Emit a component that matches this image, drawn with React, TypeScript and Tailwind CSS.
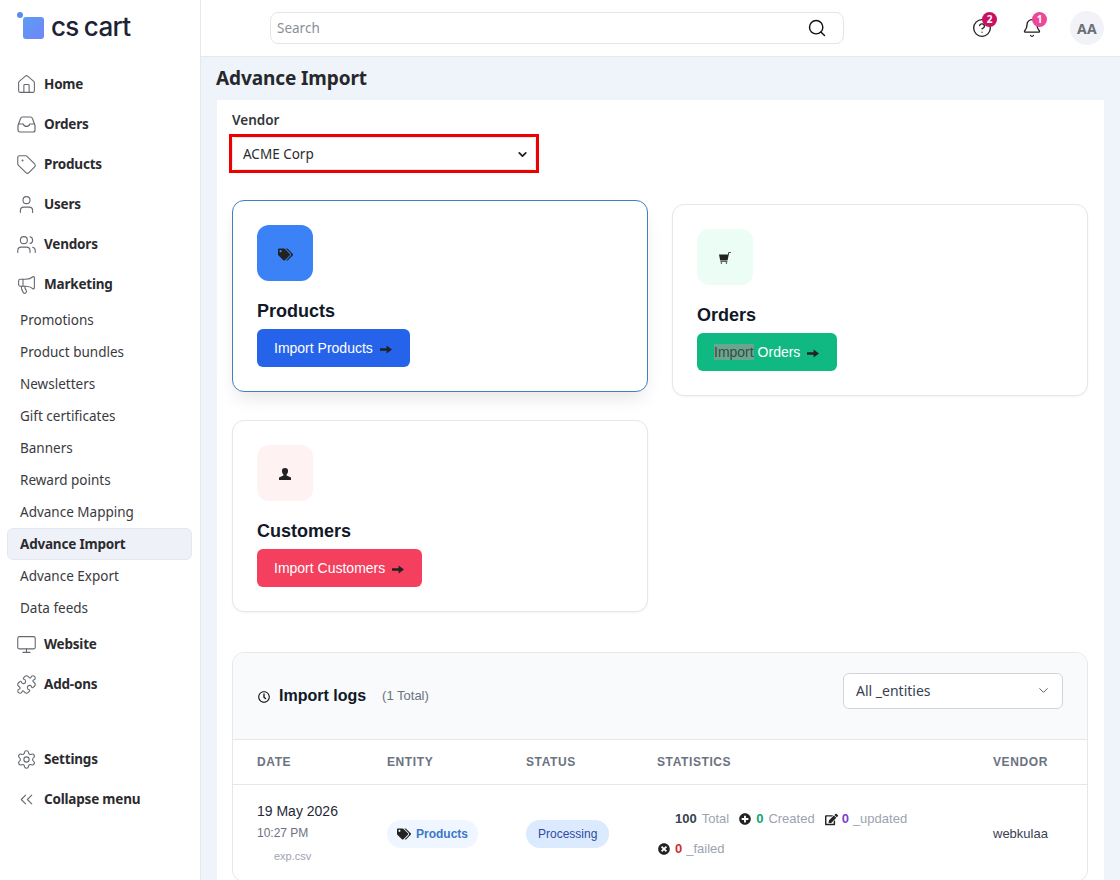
import {
  Bell,
  ChevronDown,
  ChevronsLeft,
  CircleHelp,
  House,
  Megaphone,
  Monitor,
  Puzzle,
  Search,
  Settings,
  Tag,
  User,
  Users,
} from "lucide-react";
import type { ReactNode } from "react";
import { FaPlusCircle, FaRegClock, FaEdit, FaTags, FaTimesCircle } from "react-icons/fa";

const ui = "font-['Noto_Sans',sans-serif]";
const body = "font-['Liberation_Sans',Arial,sans-serif]";

const subItems = [
  "Promotions",
  "Product bundles",
  "Newsletters",
  "Gift certificates",
  "Banners",
  "Reward points",
  "Advance Mapping",
  "Advance Import",
  "Advance Export",
  "Data feeds",
];

function TrayIcon() {
  return (
    <svg width="19" height="17" viewBox="0 0 19 17" fill="none" stroke="currentColor" strokeWidth="1.2" strokeLinejoin="round">
      <path d="M1 9.5 3.6 2.4A2 2 0 0 1 5.5 1h8a2 2 0 0 1 1.9 1.4L18 9.5V14a2 2 0 0 1-2 2H3a2 2 0 0 1-2-2z" />
      <path d="M1 8h5.2c.5 1.5 1.8 2.4 3.3 2.4s2.8-.9 3.3-2.4H18" />
    </svg>
  );
}

function ArrowIcon() {
  return (
    <svg width="12" height="9" viewBox="0 0 12 9" fill="currentColor" className="mt-[2px]">
      <path d="M0 3.2h6.6V.4L12 4.5 6.6 8.6V5.8H0z" />
    </svg>
  );
}

function CartIcon() {
  return (
    <svg width="12" height="12" viewBox="0 0 12 12" fill="currentColor">
      <path d="M0 2.6h8.9L9.4.3H12v.8h-1.9L8.5 8.6H1.2z" />
      <path d="M1.4 9.2h7v.7h-7z" />
      <circle cx="2.4" cy="11" r=".8" />
      <circle cx="7.4" cy="11" r=".8" />
    </svg>
  );
}

function BustIcon() {
  return (
    <svg width="12" height="12" viewBox="0 0 12 12" fill="currentColor">
      <path d="M6 0a3 3 0 0 1 3 3.3c0 1.4-.7 2.6-1.4 3.1v1L12 9.6V12H0V9.6l4.4-2.2v-1C3.7 5.9 3 4.7 3 3.3A3 3 0 0 1 6 0z" />
    </svg>
  );
}

function NavItem({ icon, label }: { icon: ReactNode; label: string }) {
  return (
    <div className="flex h-10 items-center gap-[7px] pl-[16px] text-[13.5px] font-bold tracking-[-0.2px] text-[#2b2b2f]">
      <span className="flex w-[21px] justify-center text-[#66696e]">{icon}</span>
      {label}
    </div>
  );
}

function Sidebar() {
  const ic = { size: 21, strokeWidth: 1.25 };
  return (
    <aside className={`${ui} flex w-[201px] shrink-0 flex-col border-r border-[#e5e8ef] bg-white`}>
      <div className="relative h-[64px]">
        <span className="absolute left-[17px] top-[12px] h-[6px] w-[6px] rounded-full bg-[#5b8def]" />
        <span className="absolute left-[23px] top-[17px] h-[22px] w-[21px] rounded-[3px] bg-gradient-to-br from-[#5b9cf5] to-[#6f86f7]" />
        <span className="absolute left-[51px] top-[9px] font-['Inter',sans-serif] text-[26px] font-medium leading-[36px] tracking-[-0.7px] text-[#1e2235] [word-spacing:-1px]">
          cs cart
        </span>
      </div>
      <NavItem icon={<House {...ic} />} label="Home" />
      <NavItem icon={<TrayIcon />} label="Orders" />
      <NavItem icon={<Tag {...ic} />} label="Products" />
      <NavItem icon={<User {...ic} />} label="Users" />
      <NavItem icon={<Users {...ic} />} label="Vendors" />
      <NavItem icon={<Megaphone {...ic} />} label="Marketing" />
      <div className="flex flex-col">
        {subItems.map((item) =>
          item === "Advance Import" ? (
            <div
              key={item}
              className="ml-[7px] mr-[8px] flex h-8 items-center rounded-[6px] border border-[#e3e8f0] bg-[#eef2f8] pl-[12px] text-[13.5px] font-bold tracking-[-0.2px] text-[#2b2b2f]"
            >
              {item}
            </div>
          ) : (
            <div key={item} className="flex h-8 items-center pl-[20px] text-[13.5px] text-[#3a3a3e]">
              {item}
            </div>
          ),
        )}
      </div>
      <NavItem icon={<Monitor {...ic} />} label="Website" />
      <NavItem icon={<Puzzle {...ic} />} label="Add-ons" />
      <div className="mt-[35px]">
        <NavItem icon={<Settings {...ic} />} label="Settings" />
        <NavItem icon={<ChevronsLeft {...ic} />} label="Collapse menu" />
      </div>
    </aside>
  );
}

function TopBar() {
  return (
    <header className="flex h-[57px] shrink-0 items-center border-b border-[#e5e8ef] bg-white pl-[69px] pr-[16px]">
      <div className={`${ui} flex h-[32px] w-[574px] items-center justify-between rounded-[8px] border border-[#e2e5ea] pl-[6px] pr-[16px] text-[13.5px] text-[#8b8f96]`}>
        <span>Search</span>
        <Search size={20} strokeWidth={1.7} className="text-[#111]" />
      </div>
      <div className="relative ml-[128px] text-[#1f1f1f]">
        <CircleHelp size={20} strokeWidth={1.6} />
        <span className={`${ui} absolute left-[10px] top-[-6px] flex h-[15px] w-[15px] items-center justify-center rounded-full bg-[#c9115f] text-[10px] font-bold text-white`}>
          2
        </span>
      </div>
      <div className="relative ml-[30px] text-[#1f1f1f]">
        <Bell size={20} strokeWidth={1.6} />
        <span className={`${ui} absolute left-[10px] top-[-6px] flex h-[15px] w-[15px] items-center justify-center rounded-full bg-[#ec4899] text-[10px] font-bold text-white`}>
          1
        </span>
      </div>
      <div className={`${ui} ml-[28px] flex h-[34px] w-[34px] items-center justify-center rounded-full bg-[#f1f3f8] text-[14px] font-bold tracking-[0.3px] text-[#6b6f76]`}>
        AA
      </div>
    </header>
  );
}

type CardProps = {
  title: string;
  action: ReactNode;
  icon: ReactNode;
  tile: string;
  button: string;
  active?: boolean;
};

function ImportCard({ title, action, icon, tile, button, active }: CardProps) {
  return (
    <div
      className={`h-[192px] rounded-[12px] border bg-white p-[24px] ${
        active
          ? "-translate-y-[4px] border-[#3f7fc4] shadow-[0_10px_18px_-4px_rgba(0,0,0,0.1)]"
          : "border-[#e5e7eb] shadow-[0_1px_2px_rgba(0,0,0,0.05)]"
      }`}
    >
      <div className={`flex h-[56px] w-[56px] items-center justify-center rounded-[12px] pt-[2px] text-[#222] ${tile}`}>
        {icon}
      </div>
      <h3 className="mt-[16px] text-[18px] font-bold leading-[28px] text-[#111827]">{title}</h3>
      <div className={`mt-[4px] inline-flex h-[38px] items-center gap-[7px] rounded-[6px] pl-[17px] pr-[18px] text-[14px] text-white ${button}`}>
        <span>{action}</span>
        <span className="text-[#222]">
          <ArrowIcon />
        </span>
      </div>
    </div>
  );
}

function LogsCard() {
  const cols = "grid grid-cols-[130px_139px_131px_336px_1fr] pl-[24px]";
  return (
    <div className="mt-[40px] overflow-hidden rounded-[12px] border border-[#e5e7eb]">
      <div className="flex h-[87px] items-center justify-between border-b border-[#e5e7eb] bg-[#f8fafc] pl-[25px] pr-[24px]">
        <div className="flex items-center">
          <FaRegClock size={12} className="mt-[2px] text-[#111]" />
          <span className="ml-[9px] text-[16px] font-bold text-[#111827]">Import logs</span>
          <span className="ml-[16px] text-[13px] text-[#6b7280]">(1 Total)</span>
        </div>
        <div className={`${ui} mb-[11px] flex h-[36px] w-[220px] items-center justify-between rounded-[6px] border border-[#d1d5db] bg-white pl-[12px] pr-[11px] text-[14px] text-[#374151]`}>
          All _entities
          <ChevronDown size={15} strokeWidth={1.5} className="text-[#4b5563]" />
        </div>
      </div>
      <div className={`${cols} h-[45px] items-center border-b border-[#e5e7eb] text-[12px] font-bold tracking-[0.6px] text-[#6b7280]`}>
        <span>DATE</span>
        <span>ENTITY</span>
        <span>STATUS</span>
        <span>STATISTICS</span>
        <span>VENDOR</span>
      </div>
      <div className={`${cols} h-[96px] items-center pt-[2px]`}>
        <div className="mt-[14px] self-start">
          <div className="text-[14px] leading-[20px] text-[#1f2937]">19 May 2026</div>
          <div className="mt-[2px] text-[12px] leading-[20px] text-[#6b7280]">10:27 PM</div>
          <div className="mt-[5px] pl-[17px] text-[11px] leading-[16px] text-[#9ca3af]">exp.csv</div>
        </div>
        <div>
          <span className="inline-flex h-[28px] items-center gap-[5px] rounded-full bg-[#eff6ff] px-[10px] text-[12px] font-bold text-[#3b78c9]">
            <FaTags size={14} className="text-[#222]" />
            Products
          </span>
        </div>
        <div>
          <span className="inline-flex h-[28px] items-center rounded-full bg-[#dbeafe] px-[12px] text-[12px] text-[#2f4a9f]">
            Processing
          </span>
        </div>
        <div className="text-[13px] leading-[30px] text-[#9ca3af]">
          <div className="flex items-center pl-[18px]">
            <b className="text-[#374151]">100</b>
            <span className="ml-[5px]">Total</span>
            <FaPlusCircle size={12} className="ml-[10px] text-[#222]" />
            <b className="ml-[5px] text-[#10a37a]">0</b>
            <span className="ml-[5px]">Created</span>
            <FaEdit size={13} className="ml-[10px] text-[#222]" />
            <b className="ml-[4px] text-[#7e3fd1]">0</b>
            <span className="ml-[4px]">_updated</span>
          </div>
          <div className="flex items-center pl-[1px]">
            <FaTimesCircle size={12} className="text-[#222]" />
            <b className="ml-[5px] text-[#c93030]">0</b>
            <span className="ml-[4px]">_failed</span>
          </div>
        </div>
        <div className="text-[13px] text-[#374151]">webkulaa</div>
      </div>
    </div>
  );
}

export default function App() {
  return (
    <div className="flex h-[880px] w-[1120px] overflow-hidden bg-white">
      <Sidebar />
      <div className="flex min-w-0 flex-1 flex-col bg-[#eff3fa]">
        <TopBar />
        <main className="flex-1 pl-[16px] pr-[16px]">
          <h1 className={`${ui} ml-[-1px] h-[43px] text-[19px] font-bold leading-[42px] tracking-[-0.1px] text-[#26282c]`}>Advance Import</h1>
          <div className={`${body} h-[800px] bg-white pl-[15px] pr-[16px] pt-[11px]`}>
            <label className={`${ui} block text-[13.5px] font-semibold leading-[18px] text-[#33363b]`}>Vendor</label>
            <div className="ml-[-3px] mt-[5px] h-[39px] w-[310px] border-[3px] border-[#ee0000]">
              <div className={`${ui} flex h-full items-center justify-between rounded-[4px] border border-[#e5e7eb] bg-white pb-0 pl-[10px] pr-[6px] pt-[1px] text-[13.5px] text-[#2b2b2f]`}>
                ACME Corp
                <ChevronDown size={13} strokeWidth={3.4} className="text-[#222]" />
              </div>
            </div>
            <div className="mt-[31px] grid grid-cols-[416px_416px] gap-x-[24px] gap-y-[24px]">
              <ImportCard
                active
                title="Products"
                action="Import Products"
                icon={<FaTags size={15} />}
                tile="bg-[#3b82f6]"
                button="bg-[#2563eb]"
              />
              <ImportCard
                title="Orders"
                action={
                  <>
                    <span className="bg-[#6aa68f] text-[#3c4a44]">Import</span> Orders
                  </>
                }
                icon={<CartIcon />}
                tile="bg-[#ecfdf5]"
                button="bg-[#10b981]"
              />
              <ImportCard
                title="Customers"
                action="Import Customers"
                icon={<BustIcon />}
                tile="bg-[#fef2f2]"
                button="bg-[#f43f5e]"
              />
            </div>
            <LogsCard />
          </div>
        </main>
      </div>
    </div>
  );
}
